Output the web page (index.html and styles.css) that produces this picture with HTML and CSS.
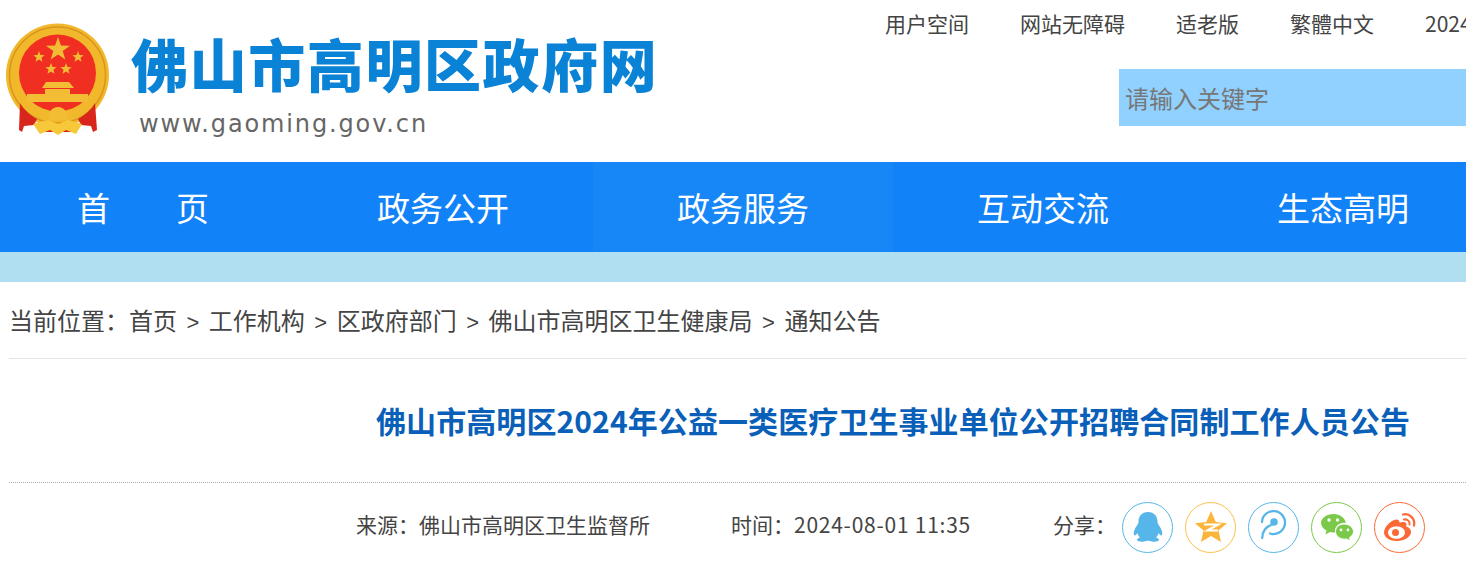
FILE: index.html
```html
<!DOCTYPE html>
<html lang="zh-CN">
<head>
  <meta charset="UTF-8" />
  <meta name="viewport" content="width=device-width, initial-scale=1.0"/>
  <title>佛山市高明区政府网</title>
  <link rel="stylesheet" href="styles.css">
</head>
<body>
  <header class="site-header">
    <a class="logo" href="#">
      <!-- National emblem -->
      <svg class="emblem" width="112" height="120" viewBox="0 0 112 120">
        <circle cx="57.500" cy="55" r="51.500" fill="#f1b82c"/>
        <circle cx="57.500" cy="55" r="48" fill="none" stroke="#d9951c" stroke-width="1.500"/>
        <circle cx="57.500" cy="53" r="38.500" fill="#f02f22"/>
        <g fill="#f2bd34">
          <polygon points="58,17 60.900,25.500 70,25.700 62.700,31 65.300,39.500 58,34.500 50.700,39.500 53.300,31 46,25.700 55.100,25.500"/>
          <polygon points="39,31 40.500,35 44.700,35.200 41.400,37.800 42.500,41.800 39,39.500 35.500,41.800 36.600,37.800 33.300,35.200 37.500,35"/>
          <polygon points="78,31 79.500,35 83.700,35.200 80.400,37.800 81.500,41.800 78,39.500 74.500,41.800 75.600,37.800 72.300,35.200 76.500,35"/>
          <polygon points="51,43 52.500,47 56.700,47.200 53.400,49.800 54.500,53.800 51,51.500 47.500,53.800 48.600,49.800 45.300,47.200 49.500,47"/>
          <polygon points="66,43 67.500,47 71.700,47.200 68.400,49.800 69.500,53.800 66,51.500 62.500,53.800 63.600,49.800 60.300,47.200 64.500,47"/>
          <path d="M46 62 H69 L74 68 H42 Z"/>
          <path d="M45 69 H70 V74 H88 V82 H27 V74 H45 Z"/>
        </g>
        <!-- ribbon ends over the ring -->
        <path d="M20 83 C24 90 30 95 37 99 L34 105 L24 106 L22 112 L19 110 Z" fill="#d9261c"/>
        <path d="M95 83 C91 90 85 95 78 99 L81 105 L91 106 L93 112 L97 110 Z" fill="#d9261c"/>
        <path d="M36 105 H79 L76 112 H39 Z" fill="#d9261c"/>
        <path d="M48 100 C48 92 52 87 58 87 C64 87 68 92 68 100 Z" fill="#f2bd34"/>
        <path d="M33 104 L48 100 L58 104 L68 100 L82 104 L76 114 L66 110 L58 115 L50 110 L40 114 Z" fill="#f6c83a"/>
      </svg>
      <div class="logo-text">
        <div class="logo-title">佛山市高明区政府网</div>
        <div class="logo-url">www.gaoming.gov.cn</div>
      </div>
    </a>
    <div class="header-right">
      <ul class="top-links">
        <li>用户空间</li>
        <li>网站无障碍</li>
        <li>适老版</li>
        <li>繁體中文</li>
        <li>2024</li>
      </ul>
      <div class="search-box">请输入关键字</div>
    </div>
  </header>

  <nav class="main-nav">
    <a href="#" class="home">首<span class="home-gap"></span>页</a>
    <a href="#">政务公开</a>
    <a href="#" class="active">政务服务</a>
    <a href="#">互动交流</a>
    <a href="#">生态高明</a>
  </nav>
  <div class="sub-band"></div>

  <main class="content">
    <div class="crumbs">
      <span>当前位置：</span><a href="#">首页</a><i>&gt;</i><a href="#">工作机构</a><i>&gt;</i><a href="#">区政府部门</a><i>&gt;</i><a href="#">佛山市高明区卫生健康局</a><i>&gt;</i><a href="#">通知公告</a>
    </div>

    <h1 class="article-title">佛山市高明区2024年公益一类医疗卫生事业单位公开招聘合同制工作人员公告</h1>

    <div class="meta">
      <span class="source">来源：佛山市高明区卫生监督所</span>
      <span class="time">时间：<span class="time-num">2024-08-01 11:35</span></span>
      <span class="share-label">分享：</span>
      <div class="share">
        <!-- QQ -->
        <a href="#" class="share-btn qq">
          <svg width="36" height="36" viewBox="0 0 36 36"><path d="M18 3 C24.500 3 27.500 7.500 27.500 12.500 C27.500 14 28 15 29 16.500 C31.500 20 33 23.500 32 26 C31.500 27 29.500 26 28.500 24 C28 26 27 27.500 26 28.500 C28 29.200 29.200 30 29 31 C28.800 32.500 24.500 33 22 32.500 C20.500 32.100 19 31.700 18 31.700 C17 31.700 15.500 32.100 14 32.500 C11.500 33 7.200 32.500 7 31 C6.800 30 8 29.200 10 28.500 C9 27.500 8 26 7.500 24 C6.500 26 4.500 27 4 26 C3 23.500 4.500 20 7 16.500 C8 15 8.500 14 8.500 12.500 C8.500 7.500 11.500 3 18 3 Z" fill="#56b6e9"/></svg>
        </a>
        <!-- Qzone -->
        <a href="#" class="share-btn qzone">
          <svg width="36" height="36" viewBox="0 0 36 36"><polygon points="18,2 22.800,13 34,14.200 25.500,21.500 28,33 18,27 8,33 10.500,21.500 2,14.200 13.200,13" fill="#fbb53c"/><path d="M11 15.500 H25 L14.500 21.500 H25" fill="none" stroke="#fff" stroke-width="2.200"/></svg>
        </a>
        <!-- Tencent weibo -->
        <a href="#" class="share-btn tweibo">
          <svg width="36" height="36" viewBox="0 0 36 36"><path d="M6 13 A11.500 11.500 0 1 1 14 24.500" fill="none" stroke="#56b6e9" stroke-width="2.300" stroke-linecap="round"/><circle cx="18" cy="13" r="3.800" fill="#56b6e9"/><path d="M16 15.500 C10 17.500 6.500 21 6.200 29" fill="none" stroke="#56b6e9" stroke-width="2.300" stroke-linecap="round"/></svg>
        </a>
        <!-- WeChat -->
        <a href="#" class="share-btn wechat">
          <svg width="36" height="36" viewBox="0 0 36 36"><path d="M14.500 5 C21 5 26 9 27 14 C21 13 15.500 17 16 23.300 C15.500 23.500 15 23.500 14.500 23.500 C13 23.500 12 23.300 11 23 L6.500 25.500 L7.500 21.500 C4 19.500 2 16.800 2 14 C2 9 7.500 5 14.500 5 Z" fill="#7bc94a"/><path d="M25 15 C30 15 34.500 18.500 34.500 22.500 C34.500 25 33 27 30.500 28.700 L31.300 32 L27.500 30 C22 31 16.500 27.500 16.500 22.500 C16.500 18.500 20 15 25 15 Z" fill="#7bc94a" stroke="#fff" stroke-width="1"/><circle cx="10" cy="11" r="1.700" fill="#fff"/><circle cx="18.500" cy="11" r="1.700" fill="#fff"/><circle cx="22" cy="21" r="1.400" fill="#fff"/><circle cx="29" cy="21" r="1.400" fill="#fff"/></svg>
        </a>
        <!-- Sina weibo -->
        <a href="#" class="share-btn sina">
          <svg width="36" height="36" viewBox="0 0 36 36"><path d="M15 32 C8 32 2 28.500 2 23.500 C2 19 7 13 12 11 C15 9.800 17.500 10.500 17.500 13.500 C20.500 12.500 24 12.500 24.500 15 C24.700 16 24.300 17 24 17.500 C27 18.500 29 20 29 23 C29 27.500 23 32 15 32 Z" fill="#fb6a36"/><ellipse cx="14.500" cy="23.500" rx="8.500" ry="6.300" fill="#fff"/><circle cx="13.500" cy="23.500" r="3.500" fill="#fb6a36"/><path d="M21 5.500 C27.500 4 33.500 9.500 32 16.500" fill="none" stroke="#fb6a36" stroke-width="2.300" stroke-linecap="round"/><path d="M22 10.500 C25.500 9.800 28.200 12.500 27.500 15.500" fill="none" stroke="#fb6a36" stroke-width="2" stroke-linecap="round"/></svg>
        </a>
      </div>
    </div>
  </main>
</body>
</html>
```

FILE: styles.css
```css
* {
  box-sizing: border-box;
}

html,
body {
  margin: 0;
  padding: 0;
  overflow: hidden;
}

body {
  width: 1466px;
  height: 562px;
  background: #fff;
  color: #444;
  font-family: "Noto Sans CJK SC", "Liberation Sans", sans-serif;
}

a {
  color: inherit;
  text-decoration: none;
}

.site-header {
  display: flex;
  justify-content: space-between;
  height: 162px;
}

.logo {
  display: flex;
  align-items: flex-start;
  padding-top: 20px;
}

.emblem {
  flex: none;
}

.logo-text {
  margin-left: 19px;
  padding-top: 11px;
}

.logo-title {
  font-size: 57px;
  line-height: 62px;
  font-weight: 900;
  letter-spacing: 1.600px;
  color: #0a82d6;
  white-space: nowrap;
}

.logo-url {
  margin: 16px 0 0 8px;
  font-family: "DejaVu Sans", sans-serif;
  font-size: 24px;
  line-height: 30px;
  letter-spacing: 1.870px;
  color: #666;
  white-space: nowrap;
}

.header-right {
  width: 581px;
}

.top-links {
  display: flex;
  gap: 51px;
  height: 39px;
  margin: 0;
  padding: 8px 0 0 0;
  overflow: hidden;
  list-style: none;
  font-size: 21px;
  line-height: 30px;
  white-space: nowrap;
}

.search-box {
  width: 347px;
  height: 57px;
  margin: 30px 0 0 234px;
  padding-left: 6px;
  background: #91d1ff;
  color: #777;
  font-size: 24px;
  line-height: 57px;
}

.main-nav {
  display: flex;
  height: 90px;
  margin-left: -7px;
  background: #1282f8;
}

.main-nav a {
  flex: none;
  width: 300px;
  color: #fff;
  font-size: 33px;
  line-height: 90px;
  text-align: center;
}

.main-nav .active {
  background: #1787f8;
}

.home-gap {
  display: inline-block;
  width: 66px;
}

.sub-band {
  height: 30px;
  background: #b0dff2;
}

.content {
  padding-left: 9px;
}

.crumbs {
  height: 77px;
  border-bottom: 1px solid #e3e3e3;
  font-size: 24px;
  line-height: 76px;
  white-space: nowrap;
}

.crumbs i {
  margin: 0 9.500px;
  font-style: normal;
  font-family: "Liberation Sans", sans-serif;
  font-size: 22px;
}

.article-title {
  height: 124px;
  margin: 0;
  padding-left: 367px;
  border-bottom: 1px dotted #aaa;
  color: #0a5fb8;
  font-size: 30px;
  line-height: 122px;
  font-weight: 700;
  letter-spacing: 0.090px;
  white-space: nowrap;
}

.meta {
  display: flex;
  align-items: center;
  height: 78px;
  padding: 10px 0 0 347px;
  font-size: 21px;
  white-space: nowrap;
}

.source,
.time,
.share-label {
  margin-bottom: 6px;
}

.source {
  width: 375px;
}

.time {
  width: 322px;
}

.time-num {
  letter-spacing: 0.750px;
}

.share-label {
  width: 69px;
}

.share {
  display: flex;
  gap: 12px;
}

.share-btn {
  display: flex;
  align-items: center;
  justify-content: center;
  width: 51px;
  height: 51px;
  border: 1px solid;
  border-radius: 50%;
}

.qq,
.tweibo {
  border-color: #56b6e9;
}

.qzone {
  border-color: #fbc04f;
}

.wechat {
  border-color: #7bc94a;
}

.sina {
  border-color: #fb6a36;
}
```
